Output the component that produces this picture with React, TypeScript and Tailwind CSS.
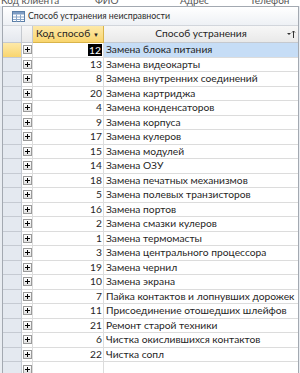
import React from 'react';

type Row = { id: number; name: string };

const rows: Row[] = [
  { id: 12, name: 'Замена блока питания' },
  { id: 13, name: 'Замена видеокарты' },
  { id: 8, name: 'Замена внутренних соединений' },
  { id: 20, name: 'Замена картриджа' },
  { id: 4, name: 'Замена конденсаторов' },
  { id: 9, name: 'Замена корпуса' },
  { id: 17, name: 'Замена кулеров' },
  { id: 15, name: 'Замена модулей' },
  { id: 14, name: 'Замена ОЗУ' },
  { id: 18, name: 'Замена печатных механизмов' },
  { id: 5, name: 'Замена полевых транзисторов' },
  { id: 16, name: 'Замена портов' },
  { id: 2, name: 'Замена смазки кулеров' },
  { id: 1, name: 'Замена термомасты' },
  { id: 3, name: 'Замена центрального процессора' },
  { id: 19, name: 'Замена чернил' },
  { id: 10, name: 'Замена экрана' },
  { id: 7, name: 'Пайка контактов и лопнувших дорожек' },
  { id: 11, name: 'Присоединение отошедших шлейфов' },
  { id: 21, name: 'Ремонт старой техники' },
  { id: 6, name: 'Чистка окислившихся контактов' },
  { id: 22, name: 'Чистка сопл' },
];

function TableIcon() {
  return (
    <svg width="13" height="11" viewBox="0 0 13 11">
      <rect x="0.5" y="0.5" width="12" height="10" fill="#fff" stroke="#5b7fa8" />
      <rect x="1" y="1" width="11" height="2.5" fill="#7d9cc4" />
      <path d="M1 6h11M1 8.5h11M4.5 3.5v7M8.5 3.5v7" stroke="#8aa6c8" strokeWidth="1" />
    </svg>
  );
}

function Expander() {
  return (
    <div className="flex h-[9px] w-[9px] items-center justify-center border border-[#9a9a9a] bg-gradient-to-b from-white to-[#e2e2e2]">
      <span className="relative block h-[5px] w-[5px]">
        <span className="absolute left-0 top-[2px] h-px w-[5px] bg-black" />
        <span className="absolute left-[2px] top-0 h-[5px] w-px bg-black" />
      </span>
    </div>
  );
}

function SortIcon() {
  return (
    <svg width="9" height="9" viewBox="0 0 9 9">
      <path d="M0 3h4L2 5z" fill="#333" />
      <path d="M6.5 1v7M5 2.5l1.5-1.5 1.5 1.5" stroke="#333" strokeWidth="1" fill="none" />
    </svg>
  );
}

export default function App() {
  return (
    <div className="h-[373px] w-[300px] overflow-hidden bg-[#e9edf2] font-['Lato','Liberation_Sans',sans-serif] text-[10.25px] text-[#1f1f1f]">
      {/* strip of the parent form's header, mostly scrolled out of view */}
      <div className="h-[6px] overflow-hidden bg-white">
        <div className="-mt-[6px] flex text-[10px] leading-[12px] text-[#555]">
          <span className="w-[95px] pl-[1px]">Код клиента</span>
          <span className="w-[85px]">ФИО</span>
          <span className="w-[70px]">Адрес</span>
          <span>Телефон</span>
        </div>
      </div>

      <div className="ml-[2px] mr-[1px] border border-[#a3a9b1] bg-white">
        <div className="flex h-[19px] items-center gap-[3px] border-b border-[#d2d6dc] bg-gradient-to-b from-white to-[#eef1f5] pl-[9px] text-[8.8px] text-[#2a2a2a]">
          <TableIcon />
          <span>Способ устранения неисправности</span>
        </div>

        <div className="grid grid-cols-[19px_11px_71px_1fr]">
          {/* header row */}
          <div className="h-[17px] border-b border-r border-[#c5c9cf] bg-gradient-to-b from-[#f3f5f8] to-[#e4e8ee]" />
          <div className="h-[17px] border-b border-r border-[#c5c9cf] bg-gradient-to-b from-[#f7f7f7] to-[#e9e9e9]" />
          <div className="flex h-[17px] items-center justify-between border-b border-r border-[#d9b44a] bg-gradient-to-b from-[#fde9a8] to-[#f9d56d] pl-[3px] pr-[4px]">
            <span className="whitespace-nowrap">Код способ</span>
            <span className="text-[6px]">▼</span>
          </div>
          <div className="relative flex h-[17px] items-center justify-center border-b border-[#c5c9cf] bg-gradient-to-b from-[#f7f7f7] to-[#e9e9e9]">
            <span>Способ устранения</span>
            <span className="absolute right-[2px] top-[4px]">
              <SortIcon />
            </span>
          </div>

          {rows.map((row, i) => {
            const current = i === 0;
            return (
              <React.Fragment key={row.id}>
                <div
                  className={`h-[14.5px] border-b border-r border-[#c5cad2] ${
                    current ? 'bg-gradient-to-b from-[#fde9a8] to-[#f9d56d]' : 'bg-[#e4e9f0]'
                  }`}
                />
                <div className="flex h-[14.5px] items-center justify-center border-b border-r border-[#dcdcdc]">
                  <Expander />
                </div>
                <div className="flex h-[14.5px] items-center justify-end border-b border-r border-[#dcdcdc] pr-[1px]">
                  <span className={current ? 'bg-black px-px leading-[12px] text-white' : ''}>{row.id}</span>
                </div>
                <div
                  className={`flex h-[14.5px] items-center whitespace-nowrap border-b border-[#dcdcdc] pl-[2px] ${
                    current ? 'bg-[#c6ddf6]' : ''
                  }`}
                >
                  {row.name}
                </div>
              </React.Fragment>
            );
          })}

          {/* new record row */}
          <div className="h-[14.5px] border-r border-[#c5cad2] bg-[#e4e9f0]" />
          <div className="flex h-[14.5px] items-center justify-center border-r border-[#dcdcdc]">
            <Expander />
          </div>
          <div className="h-[14.5px] border-r border-[#dcdcdc]" />
          <div className="h-[14.5px]" />
        </div>
      </div>
    </div>
  );
}
